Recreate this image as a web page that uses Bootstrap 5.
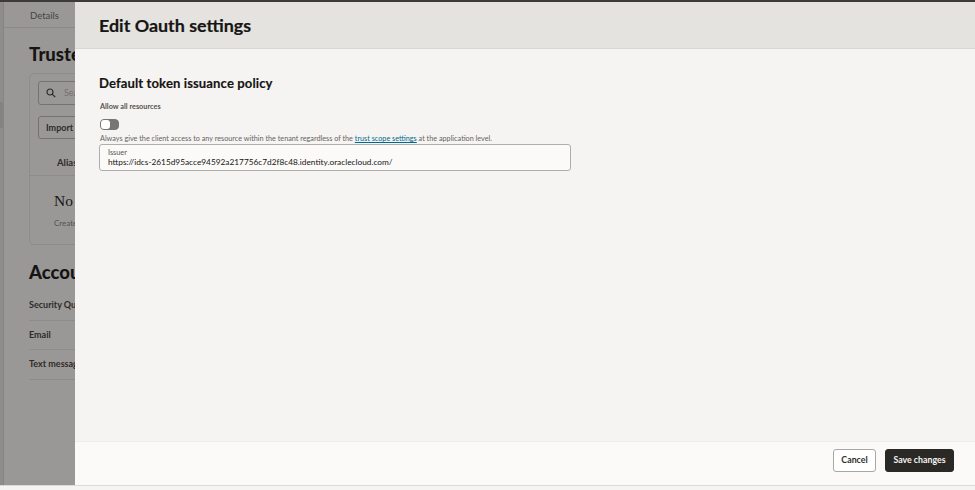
<!DOCTYPE html>
<html lang="en">
<head>
<meta charset="utf-8">
<title>Edit Oauth settings</title>
<link href="https://cdn.jsdelivr.net/npm/bootstrap@5.3.0/dist/css/bootstrap.min.css" rel="stylesheet">
<style>
html,body{height:490px;overflow:hidden;}
body{background:#f5f4f2;font-family:"Lato","Liberation Sans",sans-serif;color:#161513;}
.shell{position:relative;width:975px;height:486px;background:#9a9896;border-top:2px solid #3d3a37;border-bottom:1px solid #dcdad7;overflow:hidden;}
.rail{width:4px;background:#8f8d8b;border-right:1px solid #878583;}
.rail-notch{height:26px;margin-top:100px;background:#858381;}
.under{width:600px;}
.under-tabs{height:26px;padding:7px 0 0 26px;font-size:9.5px;color:#45433f;border-bottom:1px solid #8b8987;}
.under-tabs span{display:block;line-height:14px;}
.under-body{padding:15px 0 0 25px;}
.under-h{font-size:18.5px;font-weight:900;line-height:22px;color:#161513;margin:0;}
.under-box{border:1px solid #8e8c8a;border-radius:5px;height:172px;margin-top:8px;width:400px;}
.under-search{margin:7px 0 0 8px;height:24px;width:300px;border:1px solid #75736f;border-radius:3px;display:flex;align-items:center;padding-left:7px;gap:8px;font-size:9px;color:#73716d;}
.under-import{margin:11px 0 0 8px;height:23px;width:70px;border:1px solid #75736f;border-radius:3px;font-size:9px;font-weight:700;padding:4px 0 0 7px;color:#2d2b28;}
.under-alias{margin:0;padding:17px 0 0 27px;height:36px;font-size:9.5px;font-weight:700;color:#2d2b28;}
.under-rule{border-top:1px solid #8e8c8a;}
.under-no{font-family:"Liberation Serif",serif;font-size:15.5px;padding:15px 0 0 24px;line-height:20px;color:#161513;}
.under-create{font-size:8px;color:#55534f;padding:7px 0 0 24px;line-height:11px;}
.under-acct{margin-top:16px;}
.under-row{width:400px;height:29.5px;border-bottom:1px solid #8e8c8a;font-size:9px;font-weight:700;line-height:28px;color:#2d2b28;}
.under-rows{margin-top:8px;}
.drawer{position:absolute;left:75px;top:0;right:0;bottom:0;background:#f5f4f2;}
.drawer-head{height:47px;background:#e4e3df;border-bottom:1px solid #d9d8d4;padding:0 0 0 24px;}
.drawer-title{font-size:17.9px;font-weight:700;margin:0;line-height:47px;-webkit-text-stroke:.2px #161513;}
.drawer-main{padding:25px 0 0 25px;}
.sec-title{font-size:13.1px;font-weight:700;line-height:18px;margin:0 0 0 -1px;letter-spacing:.1px;-webkit-text-stroke:.15px #161513;}
.lbl{font-size:7.3px;font-weight:700;color:#55534f;line-height:10px;margin-top:10px;}
.tog{width:19px;height:11px;margin-top:7px;border-radius:4px;background:#787673;border:1px solid #787673;position:relative;}
.tog::before{content:"";position:absolute;left:0;top:0;width:9px;height:9px;border-radius:3px;background:#fff;}
.hint{font-size:7.25px;line-height:10px;color:#66635f;margin-top:4px;white-space:nowrap;}
.hint a{color:#00688c;font-weight:400;text-decoration:underline;}
.field{width:472px;height:27px;margin:0 0 0 -1px;background:#fbfaf8;border:1px solid #b0aeaa;border-radius:3px;padding:3px 0 0 8px;}
.field-lbl{font-size:7.3px;line-height:9px;color:#55534f;}
.field-val{font-size:8.3px;line-height:11px;color:#161513;}
.drawer-foot{position:absolute;left:0;right:0;bottom:0;height:44px;background:#fbfaf8;border-top:1px solid #eeedea;padding:7px 21px 0 0;column-gap:9px;}
.b-cancel,.b-save{height:23px;font-size:8.8px;font-weight:700;line-height:1;padding:0;border-radius:3px;}
.b-cancel{width:43px;background:#fff;border:1px solid #aaa8a4;color:#312f2c;}
.b-save{width:69px;background:#2b2926;border:1px solid #2b2926;color:#f5f4f2;}
</style>
</head>
<body>
<div class="shell d-flex">
  <div class="rail flex-shrink-0"><div class="rail-notch"></div></div>
  <div class="under flex-shrink-0">
    <div class="under-tabs"><span>Details</span></div>
    <div class="under-body">
      <h2 class="under-h">Trusted</h2>
      <div class="under-box">
        <div class="under-search">
          <svg width="10" height="10" viewBox="0 0 10 10" fill="none" stroke="#2d2b28" stroke-width="1.2"><circle cx="4" cy="4" r="3"/><path d="M6.2 6.2 9.2 9.2"/></svg>
          <span>Search</span>
        </div>
        <div class="under-import">Import</div>
        <div class="under-alias">Alias</div>
        <div class="under-rule"></div>
        <div class="under-no">No items</div>
        <div class="under-create">Create</div>
      </div>
      <h2 class="under-h under-acct">Account</h2>
      <div class="under-rows">
        <div class="under-row">Security Questions</div>
        <div class="under-row">Email</div>
        <div class="under-row">Text message</div>
      </div>
    </div>
  </div>
  <div class="drawer">
    <div class="drawer-head"><h1 class="drawer-title">Edit Oauth settings</h1></div>
    <div class="drawer-main">
      <h2 class="sec-title">Default token issuance policy</h2>
      <div class="lbl">Allow all resources</div>
      <div class="tog"></div>
      <div class="hint">Always give the client access to any resource within the tenant regardless of the <a href="#">trust scope settings</a> at the application level.</div>
      <div class="field">
        <div class="field-lbl">Issuer</div>
        <div class="field-val">https://idcs-2615d95acce94592a217756c7d2f8c48.identity.oraclecloud.com/</div>
      </div>
    </div>
    <div class="drawer-foot d-flex justify-content-end">
      <button type="button" class="btn b-cancel">Cancel</button>
      <button type="button" class="btn b-save">Save changes</button>
    </div>
  </div>
</div>
</body>
</html>
